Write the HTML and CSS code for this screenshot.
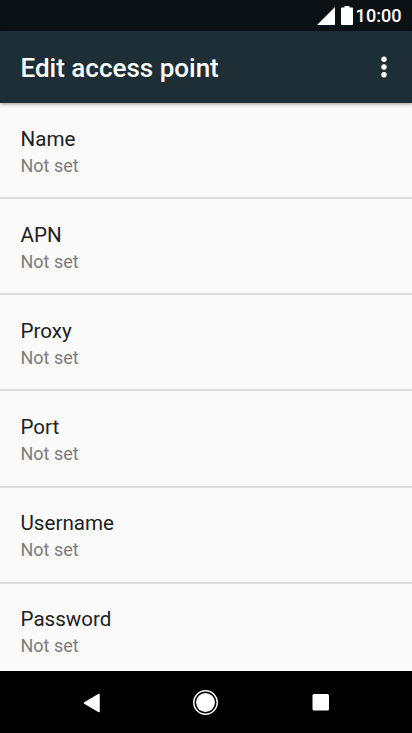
FILE: index.html
```
<!DOCTYPE html>
<html lang="en">
<head>
  <meta charset="UTF-8">
  <meta name="viewport" content="width=device-width, initial-scale=1.0">
  <title>Edit access point</title>
  <link rel="stylesheet" href="styles.css">
</head>
<body>
  <div class="status-bar">
    <svg class="signal" width="18" height="18" viewBox="0 0 18 18"><path d="M0 18L18 0V18Z" fill="#fff"/></svg>
    <svg class="battery" width="12" height="19" viewBox="0 0 12 19"><path d="M3.500 0h5v1.500H11a1 1 0 0 1 1 1V18a1 1 0 0 1-1 1H1a1 1 0 0 1-1-1V2.500a1 1 0 0 1 1-1h2.500z" fill="#fff"/></svg>
    <span class="clock">10:00</span>
  </div>

  <header class="toolbar">
    <h1>Edit access point</h1>
    <button class="menu-btn" aria-label="More options">
      <svg width="6" height="22" viewBox="0 0 6 22" fill="#fff">
        <circle cx="3" cy="3.200" r="2.700"/>
        <circle cx="3" cy="11" r="2.700"/>
        <circle cx="3" cy="18.800" r="2.700"/>
      </svg>
    </button>
  </header>

  <main class="settings">
    <div class="item">
      <div class="item-title">Name</div>
      <div class="item-value">Not set</div>
    </div>
    <div class="item">
      <div class="item-title">APN</div>
      <div class="item-value">Not set</div>
    </div>
    <div class="item">
      <div class="item-title">Proxy</div>
      <div class="item-value">Not set</div>
    </div>
    <div class="item">
      <div class="item-title">Port</div>
      <div class="item-value">Not set</div>
    </div>
    <div class="item">
      <div class="item-title">Username</div>
      <div class="item-value">Not set</div>
    </div>
    <div class="item">
      <div class="item-title">Password</div>
      <div class="item-value">Not set</div>
    </div>
  </main>

  <nav class="nav-bar">
    <button aria-label="Back">
      <svg width="26" height="26" viewBox="0 0 26 26"><path d="M5.500 13L20 4.500V21.500Z" fill="#fff" stroke="#fff" stroke-width="1.500" stroke-linejoin="round"/></svg>
    </button>
    <button aria-label="Home">
      <svg width="26" height="26" viewBox="0 0 26 26"><circle cx="12.500" cy="12.500" r="11.700" fill="none" stroke="#fff" stroke-width="1.500"/><circle cx="12.500" cy="12.500" r="9.400" fill="#fff"/></svg>
    </button>
    <button aria-label="Recents">
      <svg width="26" height="26" viewBox="0 0 26 26"><rect x="5.500" y="4" width="16.500" height="16.500" rx="1.500" fill="#fff"/></svg>
    </button>
  </nav>
</body>
</html>
```

FILE: styles.css
```
body {
  margin: 0;
  height: 100vh;
  display: flex;
  flex-direction: column;
  overflow: hidden;
  font-family: Roboto, sans-serif;
  background: #fafafa;
}

button {
  display: flex;
  padding: 0;
  border: none;
  background: none;
}

.status-bar {
  flex: none;
  height: 31px;
  display: flex;
  align-items: center;
  justify-content: flex-end;
  padding-right: 10.5px;
  box-sizing: border-box;
  background: #0c1115;
  color: #fff;
}

.signal {
  margin-right: 6px;
}

.battery {
  margin-right: 2.5px;
}

.clock {
  font-size: 18.1px;
  font-weight: 500;
  line-height: 31px;
}

.toolbar {
  flex: none;
  height: 72px;
  display: flex;
  align-items: center;
  justify-content: space-between;
  padding: 0 25.5px 0 20.5px;
  box-sizing: border-box;
  background: #1d2e36;
  box-shadow: 0 1px 4px rgba(0,0,0,0.4);
  z-index: 1;
}

.toolbar h1 {
  margin: 0;
  padding-top: 1px;
  font-size: 26px;
  font-weight: 500;
  color: #fff;
}

.settings {
  flex: 1;
  min-height: 0;
  overflow: hidden;
}

.item {
  height: 96.13px;
  padding: 22.8px 20.5px 0;
  box-sizing: border-box;
  border-bottom: 2px solid #dedede;
}

.item-title {
  font-size: 20.6px;
  line-height: 27px;
  color: #212121;
}

.item-value {
  font-size: 18px;
  line-height: 25px;
  color: #7c7c7c;
}

.nav-bar {
  flex: none;
  height: 62px;
  display: flex;
  align-items: center;
  justify-content: space-between;
  padding: 1px 79px 0;
  box-sizing: border-box;
  background: #000;
}
```
